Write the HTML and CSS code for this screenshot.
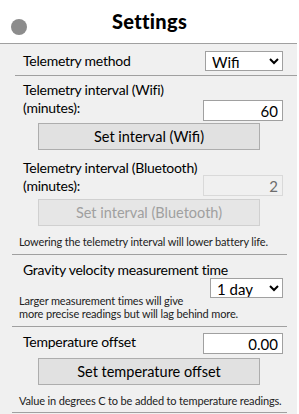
FILE: index.html
```html
<!DOCTYPE html>
<html lang="en">
<head>
    <meta charset="UTF-8">
    <title>Settings</title>
    <link rel="stylesheet" href="styles.css">
</head>
<body>
<div class="page">
    <div class="header">
        <span class="dot"></span>
        <h1>Settings</h1>
    </div>
    <div class="content">
        <!--telemetry method-->
        <div class="section first">
            <div class="row mid">
                <label>Telemetry method</label>
                <select class="pick wide">
                    <option>Wifi</option>
                </select>
            </div>
        </div>
        <!--telemetry interval-->
        <div class="section">
            <div class="row">
                <label class="two">Telemetry interval (Wifi)<br>(minutes):</label>
                <input class="num" type="text" value="60">
            </div>
            <button class="btn">Set interval (Wifi)</button>
            <div class="row second">
                <label class="two">Telemetry interval (Bluetooth)<br>(minutes):</label>
                <input class="num" type="text" value="2" disabled>
            </div>
            <button class="btn" disabled>Set interval (Bluetooth)</button>
            <p class="note">Lowering the telemetry interval will lower battery life.</p>
        </div>
        <!--gravity-->
        <div class="section">
            <label class="title">Gravity velocity measurement time</label>
            <select class="pick day">
                <option>1 day</option>
            </select>
            <p class="note pull">Larger measurement times will give<br>more precise readings but will lag behind more.</p>
        </div>
        <!--temperature-->
        <div class="section last">
            <div class="row top">
                <label>Temperature offset</label>
                <input class="num" type="text" value="0.00">
            </div>
            <button class="btn">Set temperature offset</button>
            <p class="note">Value in degrees C to be added to temperature readings.</p>
        </div>
    </div>
</div>
</body>
</html>
```

FILE: styles.css
```css
* {
    margin: 0;
    padding: 0;
    box-sizing: border-box;
}

body {
    background-color: #fff;
    font-family: Lato, "Noto Sans", sans-serif;
    color: #000;
}

.page {
    width: 297px;
}

.header {
    height: 44px;
    background-color: #fff;
    border-bottom: 1px solid #a0a0a0;
    display: flex;
    align-items: center;
    justify-content: center;
    position: relative;
}

.dot {
    position: absolute;
    left: 11px;
    top: 19px;
    width: 16px;
    height: 16px;
    border-radius: 50%;
    background-color: #8c8c8c;
}

.header h1 {
    font-size: 20px;
    font-weight: 900;
    letter-spacing: 0.3px;
    line-height: 24px;
    margin: -1px 0 0 2px;
}

.content {
    background-color: #f0f0f0;
    height: 370px;
}

.section {
    margin: 0 10px 0 12px;
    padding: 0 4px 6px 11px;
    border-bottom: 1px solid #a0a0a0;
    display: flex;
    flex-direction: column;
}

.section.first {
    margin: 0 0 0 15px;
    padding: 7px 14px 4px 8px;
}

.section.last {
    padding-bottom: 5px;
}

.row {
    display: flex;
    justify-content: space-between;
    align-items: flex-end;
    margin-top: 5px;
}

.row.mid {
    align-items: center;
    margin-top: 0;
}

.row.second {
    margin-top: 9px;
}

.row.top {
    align-items: flex-start;
    margin-top: 6px;
}

label {
    font-size: 14px;
    letter-spacing: -0.25px;
    line-height: 18px;
    white-space: nowrap;
}

.two {
    padding-bottom: 4px;
}

.second .two {
    padding-bottom: 1px;
}

.title {
    margin-top: 6px;
}

.pick {
    width: 73px;
    height: 20px;
    font-family: inherit;
    font-size: 15px;
    background-color: #fff;
    border: 1px solid #a0a0a0;
    padding-left: 2px;
    color: #000;
}

.pick.wide {
    width: 78px;
}

.pick.day {
    align-self: flex-end;
    margin-top: -1px;
}

.num {
    width: 80px;
    height: 21px;
    font-family: inherit;
    font-size: 15px;
    text-align: right;
    padding-right: 4px;
    border: 1px solid #a0a0a0;
    background-color: #fff;
    color: #000;
}

.num:disabled {
    background-color: #f0f0f0;
    border-color: #d9d9d9;
    color: #6d6d6d;
}

.btn {
    width: 222px;
    height: 27px;
    margin: 2px 0 0 15px;
    font-family: inherit;
    font-size: 14.5px;
    background-color: #e1e1e1;
    border: 1px solid #adadad;
    color: #000;
}

.row.top + .btn {
    margin-top: 4px;
}

.btn:disabled {
    margin-top: 3px;
    background-color: #e6e6e6;
    border-color: #d0d0d0;
    color: #a0a0a0;
}

.note {
    font-size: 11px;
    letter-spacing: -0.15px;
    line-height: 13px;
    color: #222;
    margin-top: 9px;
    margin-left: -4px;
    white-space: nowrap;
}

.note.pull {
    margin-top: -4px;
}
```
